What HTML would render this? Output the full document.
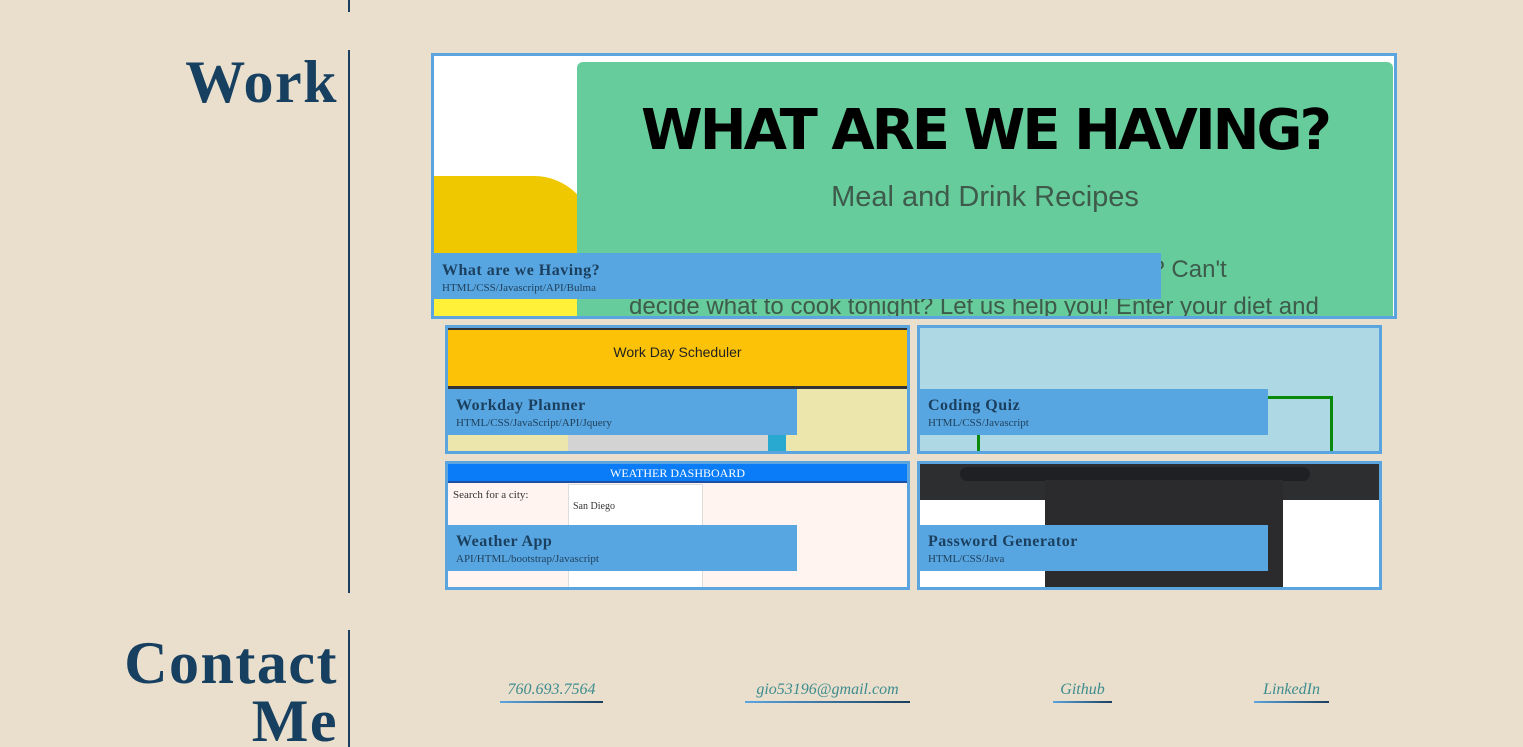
<!DOCTYPE html>
<html><head><meta charset="utf-8"><style>
*{margin:0;padding:0;box-sizing:border-box}
html,body{width:1523px;height:747px;overflow:hidden}
body{background:#e9dfcc;position:relative;font-family:"Liberation Serif",serif}
.vl{position:absolute;left:348px;width:2px;background:#1b3f5e}
h2{position:absolute;right:1185px;font-family:"Liberation Serif",serif;font-weight:bold;font-size:60px;letter-spacing:1.5px;color:#173f60;text-align:right;line-height:58px}
.card{position:absolute;border:3px solid #5aa5e0;overflow:hidden}
.cap{position:absolute;left:0;background:#58a6e1;color:#1b3f5e;padding-left:8px}
.cap b{display:block;font-size:16px;letter-spacing:.5px}
.cap span{display:block;font-size:11px;color:#1f3f5a;margin-top:2px}
.lnk{position:absolute;top:681px;font-style:italic;font-size:16px;color:#3f8c8f;height:22px;text-align:center}
.lnk:after{content:"";position:absolute;left:0;right:0;bottom:0;height:2px;background:linear-gradient(90deg,#5aa5e0,#1b3f5e)}
</style></head><body>
<div class="vl" style="top:0;height:12px"></div>
<div class="vl" style="top:50px;height:543px"></div>
<div class="vl" style="top:630px;height:117px"></div>
<h2 style="top:53px">Work</h2>
<h2 style="top:634px">Contact<br>Me</h2>

<div class="card" style="left:431px;top:53px;width:966px;height:266px;background:#fff">
 <div style="position:absolute;left:0;top:120px;width:160px;height:150px;background:#f0c800;border-radius:0 60px 0 0"></div>
 <div style="position:absolute;left:0;top:200px;width:145px;height:70px;background:#fff03a"></div>
 <div style="position:absolute;left:143px;top:6px;width:816px;height:260px;background:#67cc9b;border-radius:6px 6px 0 0"></div>
 <div style="position:absolute;left:143px;top:42px;width:816px;text-align:center;font-family:'DejaVu Sans',sans-serif;font-weight:bold;font-size:56px;letter-spacing:-3px;color:#000">WHAT ARE WE HAVING?</div>
 <div style="position:absolute;left:143px;top:125px;width:816px;text-align:center;font-family:'Liberation Sans',sans-serif;font-size:29px;color:#3d5a4b">Meal and Drink Recipes</div>
 <div style="position:absolute;left:600px;top:200px;font-family:'Liberation Sans',sans-serif;font-size:24px;color:#3d5a4b">what to eat? Can't</div>
 <div style="position:absolute;left:195px;top:237px;font-family:'Liberation Sans',sans-serif;font-size:24px;color:#3d5a4b;white-space:nowrap">decide what to cook tonight? Let us help you! Enter your diet and</div>
 <div class="cap" style="top:197px;width:727px;height:46px;padding-top:9px"><b>What are we Having?</b><span>HTML/CSS/Javascript/API/Bulma</span></div>
</div>

<div class="card" style="left:445px;top:325px;width:465px;height:129px;background:#ede6ac">
 <div style="position:absolute;left:0;top:0;width:100%;height:61px;background:#fcc208;border-top:2px solid #333;border-bottom:3px solid #333"></div>
 <div style="position:absolute;left:0;top:16px;width:100%;text-align:center;font-family:'Liberation Sans',sans-serif;font-size:14px;color:#222">Work Day Scheduler</div>
 <div style="position:absolute;left:120px;top:105px;width:200px;height:20px;background:#d3d3d3"></div>
 <div style="position:absolute;left:320px;top:105px;width:18px;height:20px;background:#29a9cf"></div>
 <div class="cap" style="top:61px;width:349px;height:46px;padding-top:8px"><b>Workday Planner</b><span>HTML/CSS/JavaScript/API/Jquery</span></div>
</div>

<div class="card" style="left:917px;top:325px;width:465px;height:129px;background:#add8e4">
 <div style="position:absolute;left:57px;top:68px;width:356px;height:60px;border:3px solid #0a8a0a;border-bottom:none"></div>
 <div class="cap" style="top:61px;width:348px;height:46px;padding-top:8px"><b>Coding Quiz</b><span>HTML/CSS/Javascript</span></div>
</div>

<div class="card" style="left:445px;top:461px;width:465px;height:129px;background:#fff4ef">
 <div style="position:absolute;left:0;top:0;width:100%;height:19px;background:#0b7cf8;border-bottom:2px solid #1d4fa0;color:#fff;text-align:center;font-size:12px;line-height:18px">WEATHER DASHBOARD</div>
 <div style="position:absolute;left:5px;top:25px;font-size:11px;color:#333">Search for a city:</div>
 <div style="position:absolute;left:120px;top:20px;width:135px;height:105px;background:#fff;border:1px solid #ddd"></div>
 <div style="position:absolute;left:125px;top:37px;font-size:10px;color:#333">San Diego</div>
 <div class="cap" style="top:61px;width:349px;height:46px;padding-top:8px"><b>Weather App</b><span>API/HTML/bootstrap/Javascript</span></div>
</div>

<div class="card" style="left:917px;top:461px;width:465px;height:129px;background:#fff">
 <div style="position:absolute;left:0;top:0;width:100%;height:36px;background:#2d2e30"></div>
 <div style="position:absolute;left:40px;top:3px;width:350px;height:14px;background:#1f2023;border-radius:8px"></div>
 <div style="position:absolute;left:125px;top:16px;width:238px;height:113px;background:#2b2b2e"></div>
 <div class="cap" style="top:61px;width:348px;height:46px;padding-top:8px"><b>Password Generator</b><span>HTML/CSS/Java</span></div>
</div>

<div class="lnk" style="left:500px;width:103px">760.693.7564</div>
<div class="lnk" style="left:745px;width:165px">gio53196@gmail.com</div>
<div class="lnk" style="left:1053px;width:59px">Github</div>
<div class="lnk" style="left:1254px;width:75px">LinkedIn</div>
</body></html>
